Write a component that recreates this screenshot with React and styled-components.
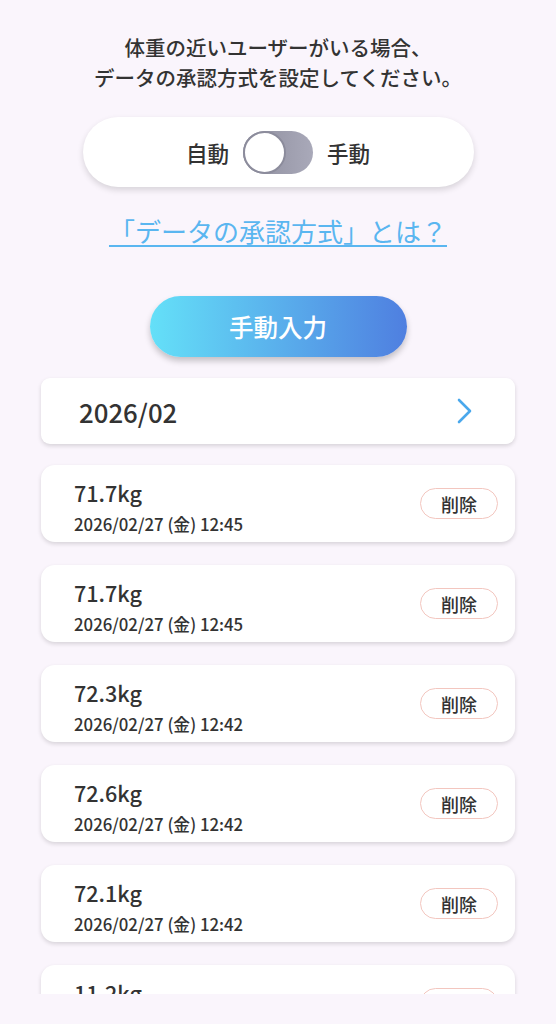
import styled, { createGlobalStyle } from "styled-components"
import { useState } from "react"

const records = [
  { weight: "71.7kg", date: "2026/02/27 (金) 12:45" },
  { weight: "71.7kg", date: "2026/02/27 (金) 12:45" },
  { weight: "72.3kg", date: "2026/02/27 (金) 12:42" },
  { weight: "72.6kg", date: "2026/02/27 (金) 12:42" },
  { weight: "72.1kg", date: "2026/02/27 (金) 12:42" },
  { weight: "11.2kg", date: "2026/02/27 (金) 12:40" },
]

export default function App() {
  const [manual, setManual] = useState(false)

  return (
    <>
      <GlobalStyle />
      <Page>
        <Scroll>
          <Lead>
            体重の近いユーザーがいる場合、<br />
            データの承認方式を設定してください。
          </Lead>
          <ModeCard>
            <ModeLabel>自動</ModeLabel>
            <Switch $on={manual} onClick={() => setManual(!manual)}>
              <Knob $on={manual} />
            </Switch>
            <ModeLabel>手動</ModeLabel>
          </ModeCard>
          <HelpLink href="#">「データの承認方式」とは？</HelpLink>
          <ManualButton>手動入力</ManualButton>
          <List>
            <MonthCard>
              <Month>2026/02</Month>
              <svg width="18" height="28" viewBox="0 0 18 28">
                <path d="M3 3 L14 14 L3 25" fill="none" stroke="#4aa8ec" strokeWidth="2.6" strokeLinecap="round" strokeLinejoin="round" />
              </svg>
            </MonthCard>
            {records.map((item, index) => (
              <RecordCard key={index}>
                <RecordText>
                  <Weight>{item.weight}</Weight>
                  <DateText>{item.date}</DateText>
                </RecordText>
                <DeleteButton>削除</DeleteButton>
              </RecordCard>
            ))}
          </List>
        </Scroll>
      </Page>
    </>
  )
}

const GlobalStyle = createGlobalStyle`
  * {
    box-sizing: border-box;
  }
  body {
    margin: 0;
    background: #faf5fc;
    font-family: "Noto Sans CJK JP", "Noto Sans", sans-serif;
    color: #333;
  }
`
const Page = styled.div`
  width: 556px;
  height: 1024px;
  background: #faf5fc;
`
const Scroll = styled.div`
  height: 994px;
  overflow: hidden;
  display: flex;
  flex-direction: column;
  align-items: center;
  padding-top: 32px;
  & > * {
    flex-shrink: 0;
  }
`
const Lead = styled.p`
  margin: 0;
  text-align: center;
  font-size: 20.5px;
  line-height: 30px;
  font-weight: 500;
  color: #333;
`
const ModeCard = styled.div`
  margin-top: 25px;
  width: 391px;
  height: 70px;
  border-radius: 35px;
  background: #fff;
  box-shadow: 0 3px 6px rgba(0, 0, 0, 0.14);
  display: flex;
  align-items: center;
  justify-content: center;
  gap: 14px;
`
const ModeLabel = styled.span`
  font-size: 21.5px;
  font-weight: 500;
  color: #333;
`
const Switch = styled.div`
  width: 70px;
  height: 43px;
  border-radius: 22px;
  background: linear-gradient(90deg, #8c8c9c, #a9a9b9);
  position: relative;
  cursor: pointer;
`
const Knob = styled.div`
  position: absolute;
  top: 0;
  left: ${(p) => (p.$on ? "27px" : "0")};
  width: 43px;
  height: 43px;
  border-radius: 50%;
  background: #fff;
  border: 2px solid #8c8c9c;
`
const HelpLink = styled.a`
  margin-top: 26px;
  font-size: 26px;
  line-height: 36px;
  color: #5ab6f0;
  text-decoration: underline;
  text-decoration-thickness: 2px;
  text-underline-offset: 3px;
`
const ManualButton = styled.button`
  margin-top: 47px;
  width: 257px;
  height: 61px;
  border: none;
  border-radius: 31px;
  background: linear-gradient(90deg, #64e0f8, #4f7fe0);
  box-shadow: 0 4px 6px rgba(0, 0, 0, 0.22);
  color: #fff;
  font-family: inherit;
  font-size: 24.5px;
  font-weight: 500;
`
const List = styled.div`
  margin-top: 21px;
  width: 474px;
  display: flex;
  flex-direction: column;
  gap: 21px;
`
const MonthCard = styled.div`
  flex-shrink: 0;
  height: 66px;
  border-radius: 9px;
  background: #fff;
  box-shadow: 0 2px 4px rgba(0, 0, 0, 0.14);
  display: flex;
  align-items: center;
  justify-content: space-between;
  padding: 0 41px 0 38px;
`
const Month = styled.span`
  font-size: 25.8px;
  font-weight: 500;
  color: #333;
`
const RecordCard = styled.div`
  flex-shrink: 0;
  height: 77px;
  margin-bottom: 2px;
  border-radius: 14px;
  background: #fff;
  box-shadow: 0 2px 4px rgba(0, 0, 0, 0.14);
  display: flex;
  align-items: center;
  justify-content: space-between;
  padding: 0 17px 0 33px;
`
const RecordText = styled.div`
  display: flex;
  flex-direction: column;
  gap: 4px;
  padding-top: 7px;
`
const Weight = styled.span`
  font-size: 21.6px;
  line-height: 30px;
  font-weight: 500;
  color: #333;
`
const DateText = styled.span`
  font-size: 16.8px;
  line-height: 24px;
  font-weight: 500;
  color: #333;
`
const DeleteButton = styled.button`
  width: 78px;
  height: 31px;
  border-radius: 16px;
  border: 1px solid #f3c6bf;
  background: #fff;
  font-family: inherit;
  font-size: 18px;
  font-weight: 500;
  color: #333;
`
